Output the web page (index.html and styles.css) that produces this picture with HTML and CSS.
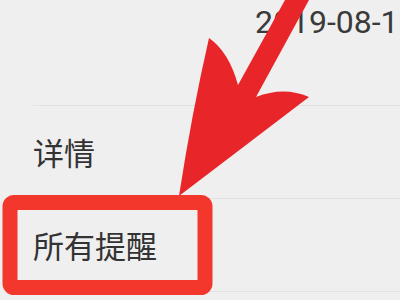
FILE: index.html
```html
<!DOCTYPE html>
<html lang="zh-CN">
<head>
<meta charset="utf-8">
<title>提醒</title>
<link rel="stylesheet" href="styles.css">
</head>
<body>
<div class="screen">
  <div class="list">
    <div class="row row-date"><span class="date">2019-08-1</span></div>
    <div class="row row-item"><span class="label">详情</span></div>
    <div class="row row-item"><span class="label">所有提醒</span></div>
  </div>
  <svg class="annot" width="400" height="300" viewBox="0 0 400 300" aria-hidden="true">
    <path class="arrow" d="M285 0 L309 0 L256 97 Q284 86 309 97 Q250 142 179 196 Q192 112 209 38 Q229 52 238 85 Z"/>
    <rect class="frame" x="10" y="202.5" width="195" height="85" rx="4" ry="4"/>
  </svg>
</div>
</body>
</html>
```
FILE: styles.css
```css
html, body {
  margin: 0;
  padding: 0;
  background: #efefef;
}
.screen {
  position: relative;
  width: 400px;
  height: 300px;
  overflow: hidden;
  background: #efefef;
}
.list {
  display: flex;
  flex-direction: column;
}
.row {
  margin-left: 33px;
  border-bottom: 1px solid #e2e2e2;
  box-sizing: border-box;
  display: flex;
}
.row-date {
  height: 106px;
  padding-top: 6px;
  padding-left: 222px;
  white-space: nowrap;
  align-items: flex-start;
}
.date {
  font-family: Roboto, "Liberation Sans", sans-serif;
  font-size: 32px;
  line-height: 32px;
  color: #3a3a3a;
}
.row-item {
  height: 93px;
  align-items: center;
}
.label {
  font-family: "Noto Sans CJK SC", "Noto Sans", sans-serif;
  font-size: 31px;
  line-height: 40px;
  color: #333333;
}
.annot {
  position: absolute;
  left: 0;
  top: 0;
}
.arrow {
  fill: #e8262a;
}
.frame {
  fill: none;
  stroke: #f4372c;
  stroke-width: 15;
}
```
